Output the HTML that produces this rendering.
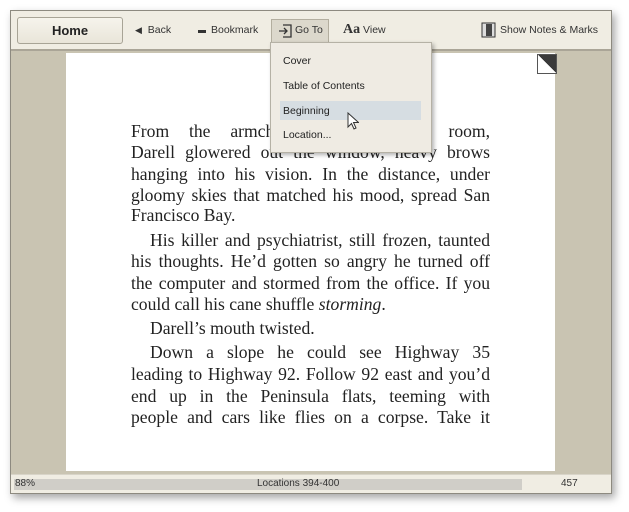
<!DOCTYPE html>
<html><head><meta charset="utf-8"><style>
*{margin:0;padding:0;box-sizing:border-box}
body{width:629px;height:512px;background:#fff;position:relative;overflow:hidden;font-family:"Liberation Sans",sans-serif}
.win{position:absolute;left:10px;top:10px;width:602px;height:484px;background:#c9c4b2;border:1px solid #8d8a80;box-shadow:3px 4px 8px rgba(0,0,0,.35)}
.tb{position:absolute;left:0;top:0;width:600px;height:40px;background:#f0ede3;border-bottom:2px solid #aaa597}
.home{position:absolute;left:6px;top:6px;width:106px;height:27px;border:1px solid #a8a496;border-radius:3px;background:linear-gradient(#f6f4ec,#e9e5d9);font-weight:bold;font-size:13px;text-align:center;line-height:25px;color:#222}
.t{position:absolute;top:13px;font-size:10.5px;color:#333}
.goto{position:absolute;left:260px;top:8px;width:58px;height:24px;background:#dcd8cc;border:1px solid #b3ae9f;border-bottom:none}
.page{position:absolute;left:55px;top:42px;width:489px;height:418px;background:#fff}
.corner{position:absolute;left:526px;top:43px;width:20px;height:20px;border:1px solid #555;background:linear-gradient(45deg,#fff 50%,#3a3a3a 50%)}
.status{position:absolute;left:0;top:463px;width:600px;height:19px;background:#f0ede3;border-top:1px solid #d8d4c8}
.bar{position:absolute;left:3px;top:4px;width:508px;height:11px;background:#d0cec8}
.st{position:absolute;top:3px;font-size:10px;color:#333}
.l{position:absolute;left:131px;width:359px;font-family:"Liberation Serif",serif;font-size:17.6px;line-height:21px;color:#222;white-space:nowrap;text-align:justify;text-align-last:justify}
.i{text-indent:19px}
.n{text-align-last:left}
.menu{position:absolute;left:270px;top:42px;width:162px;height:111px;background:#efebe3;border:1px solid #b5b1a5;box-shadow:2px 2px 4px rgba(0,0,0,.3);z-index:5}
.mi{position:absolute;left:12px;font-size:10.5px;color:#222}
.hl{position:absolute;left:9px;top:58px;width:141px;height:19px;background:#d6dde2}
</style></head><body>
<div class="win">
<div class="tb">
<div class="home">Home</div>
<div class="t" style="left:124px"><span style="font-size:9px">◀</span>&nbsp; Back</div>
<div style="position:absolute;left:187px;top:19px;width:8px;height:3px;background:#333"></div>
<div class="t" style="left:200px">Bookmark</div>
<div class="goto"></div>
<svg style="position:absolute;left:267px;top:13px" width="14" height="14" viewBox="0 0 14 14"><path d="M5 1h8v12H5M1 7h8M6 4l3 3-3 3" fill="none" stroke="#333" stroke-width="1.3"/></svg>
<div class="t" style="left:284px">Go To</div>
<div class="t" style="left:332px;top:11px"><b style="font-family:'Liberation Serif',serif;font-size:14px">Aa</b> View</div>
<svg style="position:absolute;left:470px;top:11px" width="15" height="16" viewBox="0 0 15 16"><rect x="1" y="1" width="13" height="14" fill="#ddd" stroke="#333"/><rect x="5" y="2" width="6" height="12" fill="#444"/></svg>
<div class="t" style="left:489px">Show Notes &amp; Marks</div>
</div>
<div class="page"></div>
<div class="corner"></div>
<div class="status"><div class="bar"></div>
<div class="st" style="left:4px">88%</div>
<div class="st" style="left:246px">Locations 394-400</div>
<div class="st" style="left:550px">457</div></div>
</div>
<div class="l" style="top:121px">From the armchair in the living room,</div>
<div class="l" style="top:142px">Darell glowered out the window, heavy brows</div>
<div class="l" style="top:164px">hanging into his vision. In the distance, under</div>
<div class="l" style="top:185px">gloomy skies that matched his mood, spread San</div>
<div class="l n" style="top:205px">Francisco Bay.</div>
<div class="l i" style="top:230px">His killer and psychiatrist, still frozen, taunted</div>
<div class="l" style="top:251px">his thoughts. He’d gotten so angry he turned off</div>
<div class="l" style="top:273px">the computer and stormed from the office. If you</div>
<div class="l n" style="top:294px">could call his cane shuffle <i>storming</i>.</div>
<div class="l n i" style="top:318px">Darell’s mouth twisted.</div>
<div class="l i" style="top:342px">Down a slope he could see Highway 35</div>
<div class="l" style="top:364px">leading to Highway 92. Follow 92 east and you’d</div>
<div class="l" style="top:386px">end up in the Peninsula flats, teeming with</div>
<div class="l" style="top:407px">people and cars like flies on a corpse. Take it</div>
<div class="menu">
<div class="hl"></div>
<div class="mi" style="top:12px">Cover</div>
<div class="mi" style="top:37px">Table of Contents</div>
<div class="mi" style="top:62px">Beginning</div>
<div class="mi" style="top:86px">Location...</div>
<svg style="position:absolute;left:76px;top:69px" width="12" height="18" viewBox="0 0 12 18"><path d="M1 1v14l3.5-3.5 2.5 5.5 2-1-2.5-5.5h5z" fill="#fff" stroke="#333" stroke-width="1"/></svg>
</div>
</body></html>
